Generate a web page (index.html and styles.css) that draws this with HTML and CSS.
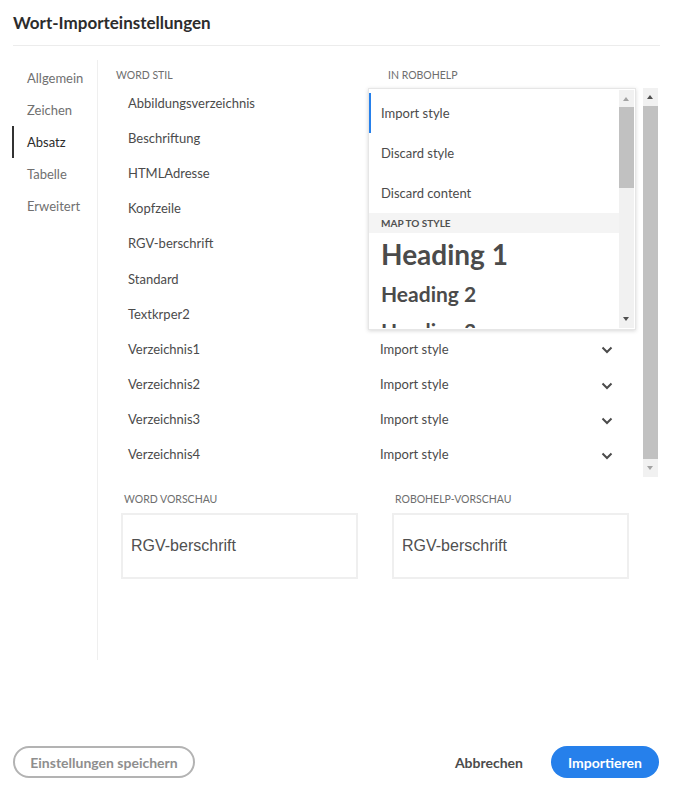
FILE: index.html
```html
<!DOCTYPE html>
<html lang="de">
<head>
<meta charset="utf-8">
<title>Wort-Importeinstellungen</title>
<link rel="stylesheet" href="styles.css">
</head>
<body>
<div class="dialog">
  <header class="head"><h1 class="title">Wort-Importeinstellungen</h1></header>
  <div class="main">
    <nav class="nav">
      <div class="nav-item">Allgemein</div>
      <div class="nav-item">Zeichen</div>
      <div class="nav-item active">Absatz</div>
      <div class="nav-item">Tabelle</div>
      <div class="nav-item">Erweitert</div>
    </nav>
    <section class="content">
      <div class="cols-head"><span class="label col-a">Word Stil</span><span class="label">In RoboHelp</span></div>
      <div class="list-wrap">
        <div class="list">
          <div class="row"><span class="cell-a">Abbildungsverzeichnis</span></div>
          <div class="row"><span class="cell-a">Beschriftung</span></div>
          <div class="row"><span class="cell-a">HTMLAdresse</span></div>
          <div class="row"><span class="cell-a">Kopfzeile</span></div>
          <div class="row"><span class="cell-a">RGV-berschrift</span></div>
          <div class="row"><span class="cell-a">Standard</span></div>
          <div class="row"><span class="cell-a">Textkrper2</span></div>
          <div class="row"><span class="cell-a">Verzeichnis1</span><span class="cell-b">Import style<svg class="chev" viewBox="0 0 12 8"><path d="M1.5 1.5 L6 6 L10.5 1.5"/></svg></span></div>
          <div class="row"><span class="cell-a">Verzeichnis2</span><span class="cell-b">Import style<svg class="chev" viewBox="0 0 12 8"><path d="M1.5 1.5 L6 6 L10.5 1.5"/></svg></span></div>
          <div class="row"><span class="cell-a">Verzeichnis3</span><span class="cell-b">Import style<svg class="chev" viewBox="0 0 12 8"><path d="M1.5 1.5 L6 6 L10.5 1.5"/></svg></span></div>
          <div class="row"><span class="cell-a">Verzeichnis4</span><span class="cell-b">Import style<svg class="chev" viewBox="0 0 12 8"><path d="M1.5 1.5 L6 6 L10.5 1.5"/></svg></span></div>
        </div>
        <div class="vscroll outer">
          <div class="arrow up dark"></div>
          <div class="thumb"></div>
          <div class="arrow down light"></div>
        </div>
        <div class="popup">
          <div class="popup-list">
            <div class="opt selected">Import style</div>
            <div class="opt">Discard style</div>
            <div class="opt">Discard content</div>
            <div class="opt-head">Map to style</div>
            <div class="opt h1">Heading 1</div>
            <div class="opt h2">Heading 2</div>
            <div class="opt h2">Heading 3</div>
          </div>
          <div class="vscroll inner">
            <div class="arrow up light"></div>
            <div class="thumb"></div>
            <div class="arrow down dark"></div>
          </div>
        </div>
      </div>
      <div class="previews">
        <div class="preview">
          <div class="label">Word Vorschau</div>
          <div class="pbox">RGV-berschrift</div>
        </div>
        <div class="preview">
          <div class="label">RoboHelp-Vorschau</div>
          <div class="pbox">RGV-berschrift</div>
        </div>
      </div>
    </section>
  </div>
  <footer class="foot">
    <button class="btn outline">Einstellungen speichern</button>
    <div class="actions">
      <button class="btn quiet">Abbrechen</button>
      <button class="btn primary">Importieren</button>
    </div>
  </footer>
</div>
</body>
</html>
```

FILE: styles.css
```css
* { box-sizing: border-box; }
html, body { margin: 0; padding: 0; background: #fff; }
body {
  font-family: Lato, "Open Sans", "Liberation Sans", sans-serif;
  color: #4b4b4b;
}
.dialog {
  width: 675px;
  height: 792px;
  display: flex;
  flex-direction: column;
}
.head {
  margin: 0 15px 0 13px;
  padding-top: 13px;
  height: 46px;
  border-bottom: 1px solid #ececec;
}
.title {
  margin: 0;
  font-size: 17px;
  line-height: 20px;
  font-weight: 700;
  color: #2c2c2c;
}
.main {
  display: flex;
  margin-top: 14px;
}
.nav {
  width: 98px;
  height: 600px;
  border-right: 1px solid #efefef;
  padding-top: 2px;
  flex: none;
}
.nav-item {
  margin-left: 12px;
  padding-left: 13px;
  height: 32px;
  line-height: 32px;
  font-size: 13px;
  color: #707070;
  border-left: 2px solid transparent;
}
.nav-item.active {
  border-left-color: #323232;
  color: #2c2c2c;
}
.content {
  flex: 1;
  padding-left: 18px;
}
.label {
  font-size: 10.5px;
  line-height: 14px;
  text-transform: uppercase;
  color: #6e6e6e;
}
.cols-head {
  display: flex;
  margin-top: 8px;
  height: 14px;
}
.col-a { width: 272px; }
.list-wrap {
  position: relative;
  display: flex;
  margin-top: 4px;
  height: 391px;
}
.list {
  width: 527px;
  padding-left: 12px;
  margin-top: -1px;
}
.row {
  display: flex;
  align-items: center;
  height: 35.2px;
  font-size: 13px;
}
.cell-a { width: 252px; }
.cell-b {
  width: 233px;
  display: flex;
  align-items: center;
  justify-content: space-between;
}
.chev {
  width: 12px;
  height: 8px;
  fill: none;
  stroke: #4b4b4b;
  stroke-width: 2;
  margin-top: 3px;
}
.vscroll {
  width: 15px;
  background: #f1f1f1;
  display: flex;
  flex-direction: column;
  flex: none;
}
.vscroll.outer {
  margin-top: 2px;
  height: 389px;
}
.thumb {
  flex: 1;
  background: #c1c1c1;
}
.arrow {
  height: 18px;
  position: relative;
}
.arrow::after {
  content: "";
  position: absolute;
  left: 4px;
  border-left: 3.5px solid transparent;
  border-right: 3.5px solid transparent;
}
.arrow.up::after { top: 7px; border-bottom: 4px solid #505050; }
.arrow.down::after { top: 7px; border-top: 4px solid #505050; }
.arrow.up.light::after { border-bottom-color: #a3a3a3; }
.arrow.down.light::after { border-top-color: #a3a3a3; }
.vscroll.inner .arrow.up { height: 17px; }
.vscroll.inner .thumb { flex: none; height: 81px; }
.vscroll.inner .arrow.down { margin-top: auto; }
.vscroll.inner {
  height: 238px;
}
.popup {
  position: absolute;
  left: 252px;
  top: 2px;
  width: 268px;
  height: 242px;
  background: #fff;
  box-shadow: 0 1px 4px rgba(0, 0, 0, 0.16);
  border: 1px solid #e6e6e6;
  display: flex;
  padding: 1px 1px 1px 0;
  overflow: hidden;
}
.popup-list {
  width: 251px;
  padding-top: 3px;
  overflow: hidden;
}
.opt {
  height: 40px;
  line-height: 40px;
  padding-left: 12px;
  font-size: 13px;
  color: #4b4b4b;
  white-space: nowrap;
}
.opt.selected {
  border-left: 2px solid #2680eb;
  padding-left: 10px;
}
.opt-head {
  height: 20px;
  line-height: 20px;
  padding-left: 12px;
  background: #f4f4f4;
  font-size: 10px;
  font-weight: 700;
  text-transform: uppercase;
  color: #505050;
}
.opt.h1 {
  height: 42px;
  line-height: 42px;
  font-size: 28px;
  font-weight: 700;
}
.opt.h2 {
  height: 37px;
  line-height: 37px;
  font-size: 21px;
  font-weight: 700;
}
.previews {
  display: flex;
  gap: 34px;
  margin-top: 15px;
  padding-left: 5px;
}
.preview { width: 237px; }
.preview .label { padding-left: 3px; margin-bottom: 7px; }
.pbox {
  height: 66px;
  border: 2px solid #efefef;
  padding-left: 8px;
  line-height: 62px;
  font-family: "Liberation Sans", Arial, sans-serif;
  font-size: 16px;
  color: #505050;
}
.foot {
  margin-top: auto;
  display: flex;
  justify-content: space-between;
  align-items: center;
  padding: 0 16px 14px 13px;
}
.actions {
  display: flex;
  align-items: center;
  gap: 12px;
}
.btn {
  font-family: Lato, "Open Sans", sans-serif;
  font-weight: 700;
  font-size: 14px;
  height: 32px;
  border-radius: 16px;
  border: 2px solid transparent;
  background: none;
  padding: 0 14px;
  cursor: pointer;
}
.btn.outline {
  width: 182px;
  border-color: #b3b3b3;
  color: #8e8e8e;
}
.btn.quiet {
  color: #4b4b4b;
}
.btn.primary {
  width: 108px;
  background: #2680eb;
  color: #fff;
}
```
